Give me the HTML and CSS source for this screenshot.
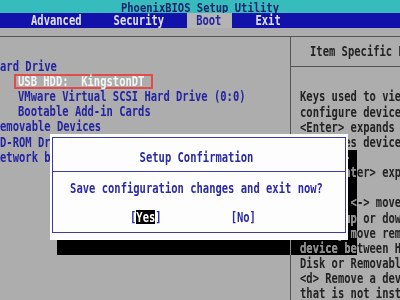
FILE: index.html
```html
<!DOCTYPE html>
<html lang="en">
<head>
    <meta charset="UTF-8">
    <title>PhoenixBIOS Setup Utility</title>
    <link rel="stylesheet" href="styles.css">
</head>
<body>
    <div class="screen">
        <div class="titlebar"><span class="tx">PhoenixBIOS Setup Utility</span></div>
        <div class="menubar">
            <span class="tab"><span class="tx">Advanced</span></span>
            <span class="tab"><span class="tx">Security</span></span>
            <span class="tab active"><span class="tx">Boot</span></span>
            <span class="tab"><span class="tx">Exit</span></span>
        </div>
        <div class="frame-top"></div>
        <div class="panels">
            <div class="left-panel">
                <div class="row top"><span class="tx">Hard Drive</span></div>
                <div class="row sub"><span class="selected"><span class="tx">USB HDD:  KingstonDT</span></span></div>
                <div class="row sub"><span class="tx">VMware Virtual SCSI Hard Drive (0:0)</span></div>
                <div class="row sub"><span class="tx">Bootable Add-in Cards</span></div>
                <div class="row top"><span class="tx">Removable Devices</span></div>
                <div class="row top"><span class="tx">CD-ROM Drive</span></div>
                <div class="row top"><span class="tx">Network boot</span></div>
            </div>
            <div class="right-panel">
                <div class="help-title"><span class="tx">Item Specific Help</span></div>
                <div class="help-text">
                    <div class="row"><span class="tx">Keys used to view or</span></div>
                    <div class="row"><span class="tx">configure devices:</span></div>
                    <div class="row"><span class="tx">&lt;Enter&gt; expands or</span></div>
                    <div class="row"><span class="tx">collapses devices with</span></div>
                    <div class="row"><span class="tx">a + or -</span></div>
                    <div class="row"><span class="tx">&lt;Ctrl+Enter&gt; expands all</span></div>
                    <div class="row"></div>
                    <div class="row"><span class="tx">&lt;+&gt; and &lt;-&gt; moves the</span></div>
                    <div class="row"><span class="tx">device up or down.</span></div>
                    <div class="row"><span class="tx">&lt;n&gt; May move removable</span></div>
                    <div class="row"><span class="tx">device between Hard</span></div>
                    <div class="row"><span class="tx">Disk or Removable Disk</span></div>
                    <div class="row"><span class="tx">&lt;d&gt; Remove a device</span></div>
                    <div class="row"><span class="tx">that is not installed.</span></div>
                </div>
            </div>
        </div>

        <div class="dialog">
            <div class="dialog-inner">
                <div class="dialog-title"><span class="tx">Setup Confirmation</span></div>
                <div class="dialog-message"><span class="tx">Save configuration changes and exit now?</span></div>
                <div class="dialog-buttons">
                    <span class="choice"><span class="tx">[</span><span class="choice-on"><span class="tx">Yes</span></span><span class="tx">]</span></span>
                    <span class="choice no"><span class="tx">[No]</span></span>
                </div>
            </div>
        </div>
        <div class="shadow shadow-right"></div>
        <div class="shadow shadow-bottom"></div>
    </div>
</body>
</html>
```

FILE: styles.css
```css
body {
    margin: 0;
    background-color: #adadad;
}
.screen {
    position: relative;
    width: 400px;
    height: 300px;
    overflow: hidden;
    background-color: #adadad;
    font-family: "DejaVu Sans Mono", "Liberation Mono", monospace;
    font-size: 10.5px;
    font-weight: bold;
}
/* text mode glyphs are tall and narrow */
.tx {
    display: inline-block;
    vertical-align: top;
    white-space: pre;
    transform: scaleY(1.3);
}
.titlebar {
    height: 13px;
    background-color: #36bcbc;
    color: #16226c;
    text-align: center;
}
.titlebar .tx {
    margin-top: 1.5px;
    line-height: 11px;
    transform: scaleY(1.15);
}
.menubar {
    position: relative;
    display: flex;
    gap: 14px;
    height: 15px;
    padding-left: 22px;
    background-color: #1212aa;
    color: #e2e2ee;
}
.menubar .tx {
    margin-top: 2px;
    line-height: 11px;
}
.tab {
    padding: 0 9px;
}
.tab.active {
    padding-right: 11px;
    background-color: #b4b4b4;
    color: #2424a0;
}
.frame-top {
    height: 8px;
    border-bottom: 1px solid #555;
}
.panels {
    display: flex;
    height: 263px;
}
.row {
    height: 15.15px;
    line-height: 15.15px;
    white-space: pre;
}
.left-panel {
    flex-shrink: 0;
    width: 290px;
    padding-top: 21.8px;
    border-right: 1px solid #555;
    color: #2424a0;
}
.left-panel .top {
    margin-left: -6.3px;
}
.left-panel .sub {
    padding-left: 18px;
}
.selected {
    display: inline-block;
    vertical-align: top;
    box-sizing: border-box;
    height: 15px;
    line-height: 11px;
    margin-left: -4px;
    padding: 0 7px 0 2px;
    border: 2px solid #e34b4b;
    color: #f4f4f4;
}
.right-panel {
    flex: 1;
    overflow: hidden;
    color: #222;
}
.help-title {
    padding: 7.4px 0 6.45px 19px;
    line-height: 15.15px;
    white-space: pre;
    border-bottom: 1px solid #555;
}
.help-text {
    padding: 22.4px 0 0 9px;
}
.dialog {
    position: absolute;
    left: 50px;
    top: 134px;
    width: 298px;
    height: 106px;
    background-color: #fdfdfd;
    color: #2a2aa2;
}
.dialog-inner {
    box-sizing: border-box;
    height: 96px;
    margin: 3px 2px;
    border: 1px solid #3a3aa8;
}
.dialog-title {
    padding: 11.5px 5px 6.5px 0;
    line-height: 15.15px;
    text-align: center;
    border-bottom: 1px solid #3a3aa8;
}
.dialog-message {
    margin-top: 8.6px;
    padding-right: 5px;
    line-height: 15.15px;
    text-align: center;
}
.dialog-buttons {
    display: flex;
    margin-top: 13.8px;
    padding-left: 77px;
    line-height: 15.15px;
}
.choice-on {
    display: inline-block;
    vertical-align: top;
    height: 14px;
    line-height: 14px;
    margin-top: 0.5px;
    background-color: #000;
    color: #fff;
}
.choice.no {
    margin-left: 69px;
}
.shadow {
    position: absolute;
    backdrop-filter: invert(1) contrast(3) brightness(0.55);
}
.shadow-right {
    left: 348px;
    top: 150px;
    width: 9px;
    height: 90px;
}
.shadow-bottom {
    left: 57px;
    top: 240px;
    width: 300px;
    height: 15px;
}
```
